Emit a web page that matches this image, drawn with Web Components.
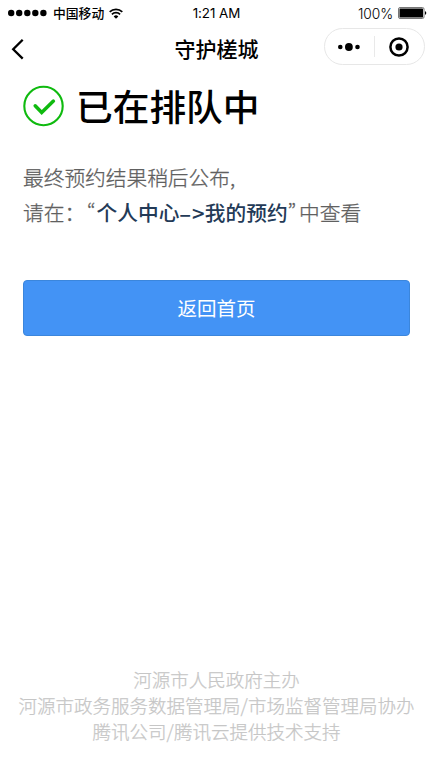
<!DOCTYPE html>
<html lang="zh-CN">
<head>
<meta charset="utf-8">
<title>守护槎城</title>
<style>
body{margin:0;background:#fff;font-family:"Noto Sans CJK SC",sans-serif;color:#000}
</style>
</head>
<body>
<queue-page></queue-page>
<script>
const define = (name, html) => {
  const t = document.createElement('template');
  t.innerHTML = html;
  customElements.define(name, class extends HTMLElement {
    constructor() {
      super();
      this.attachShadow({mode: 'open'}).append(t.content.cloneNode(true));
    }
  });
};

define('status-bar', `
<style>
:host{display:grid;grid-template-columns:1fr auto 1fr;height:25px;align-items:center;padding:0 6px 0 8px;box-sizing:border-box;font-size:12.8px;line-height:23px}
.l,.r{display:flex;align-items:center}
.r{justify-content:flex-end;gap:5px}
.car{font-weight:500;margin:-2px 5px 0 6px}
.t,.p{font-family:Inter,"Liberation Sans",sans-serif;font-size:13.4px;letter-spacing:-.2px}
.t{margin:0 2px 0 0;letter-spacing:-.05px}
.p{font-size:13.8px;padding-top:3px;letter-spacing:-.1px;font-weight:300}
svg{display:block}
</style>
<div class="l">
<svg width="39" height="8" viewBox="0 0 39 8" style="margin-top:-1px"><circle cx="3.2" cy="4" r="3.2"/><circle cx="11.2" cy="4" r="3.2"/><circle cx="19.3" cy="4" r="3.2"/><circle cx="27.3" cy="4" r="3.2"/><circle cx="35.4" cy="4" r="3.2"/></svg>
<span class="car">中国移动</span>
<svg width="14" height="11" viewBox="0 0 14 11" fill="none" stroke="#000" stroke-width="1.7"><path d="M.7 3.9a9 9 0 0 1 12.6 0M2.9 6.4a5.8 5.8 0 0 1 8.2 0"/><path d="M7 10.7 4.7 8.4a3.3 3.3 0 0 1 4.6 0z" fill="#000" stroke="none"/></svg>
</div>
<span class="t">1:21 AM</span>
<div class="r"><span class="p">100%</span>
<svg width="29" height="12" viewBox="0 0 29 12" style="margin-top:-1px"><rect x=".5" y=".5" width="25.5" height="11" rx="1.5" fill="#fff" stroke="#777"/><rect x="1.5" y="1.5" width="23.5" height="9" rx=".5"/><path d="M27 4q2.6 2 0 4z"/></svg></div>`);

define('mini-capsule', `
<style>
:host{display:flex;align-items:center;box-sizing:border-box;width:101px;height:37px;border:1px solid #e7e7e7;border-radius:19px;background:#fff}
div{flex:1;display:flex;justify-content:center}
div:first-child{padding-left:3px}
div:last-child{padding-right:1px}
i{width:1px;height:21px;background:#e9e9e9}
</style>
<div><svg width="24" height="10" viewBox="0 0 24 10"><circle cx="3.3" cy="5" r="2.3"/><circle cx="11.9" cy="5" r="3.9"/><circle cx="20.5" cy="5" r="2.3"/></svg></div><i></i>
<div><svg width="20" height="20" viewBox="0 0 20 20"><circle cx="10" cy="10" r="8.6" fill="none" stroke="#000" stroke-width="2.5"/><circle cx="10" cy="10" r="3.6"/></svg></div>`);

define('nav-bar', `
<style>
:host{display:grid;grid-template-columns:1fr auto 1fr;align-items:center;height:47px;padding:0 8px 0 11px;box-sizing:border-box}
h1{margin:-1px 3px 0 0;font-size:21px;line-height:30px;font-weight:500}
mini-capsule{justify-self:end;margin-top:-4px}
svg{display:block}
</style>
<svg width="14" height="22" viewBox="0 0 14 22" fill="none" stroke="#000" stroke-width="2.3"><path d="M11.7 1.8 2.2 11.2l9.5 9.4"/></svg>
<h1><slot></slot></h1>
<mini-capsule></mini-capsule>`);

define('result-heading', `
<style>
:host{display:flex;align-items:center;gap:12px;height:42px}
h2{margin:-2px 0 0;font-size:36.7px;line-height:42px;font-weight:500}
svg{flex:none}
</style>
<svg width="41" height="42" viewBox="0 0 41 42" fill="none" stroke="#0fba0f"><circle cx="20.5" cy="21" r="19.2" stroke-width="2.1"/><path d="m12.2 20.8 6.5 6.7 11.7-11.4" stroke-width="3.5" stroke-linecap="round"/></svg>
<h2><slot></slot></h2>`);

define('result-note', `
<style>
:host{display:block;font-size:20.7px;line-height:34.5px;color:#606060;font-weight:300;-webkit-text-stroke:.3px #606060}
p{margin:0;display:flex;white-space:pre}
b{font-weight:500;color:#233a57;display:flex;-webkit-text-stroke:0}
.q{width:11.5px;flex:none;font-feature-settings:"pwid"}
.q.o{width:9.5px;padding-left:2px}
.a{width:25.5px;flex:none;font-size:22px;letter-spacing:.9px}
</style>
<p>最终预约结果稍后公布,</p>
<p>请在：<span class="q o">“</span><b>个人中心<span class="a">–&gt;</span>我的预约</b><span class="q">”</span>中查看</p>`);

define('primary-button', `
<style>
:host{display:block}
button{display:block;width:100%;height:56px;padding:0;border:1px solid #3b86dc;border-radius:4px;background:#4393f5;color:#fff;font:400 19.5px/54px "Noto Sans CJK SC",sans-serif}
</style>
<button><slot></slot></button>`);

define('page-footer', `
<style>
:host{display:block;text-align:center;font-size:18.5px;line-height:26px;font-weight:300;color:#c6c6c6;white-space:nowrap;-webkit-text-stroke:.25px #c6c6c6}
p{margin:0}
</style>
<p>河源市人民政府主办</p>
<p>河源市政务服务数据管理局/市场监督管理局协办</p>
<p>腾讯公司/腾讯云提供技术支持</p>`);

define('queue-page', `
<style>
:host{display:flex;flex-direction:column;height:770px;overflow:hidden}
main{flex:1;padding:13px 23px 0;display:flex;flex-direction:column}
result-note{margin:33px 0 51px}
page-footer{padding-bottom:26px}
</style>
<status-bar></status-bar>
<nav-bar>守护槎城</nav-bar>
<main>
<result-heading>已在排队中</result-heading>
<result-note></result-note>
<primary-button>返回首页</primary-button>
</main>
<page-footer></page-footer>`);
</script>
</body>
</html>
